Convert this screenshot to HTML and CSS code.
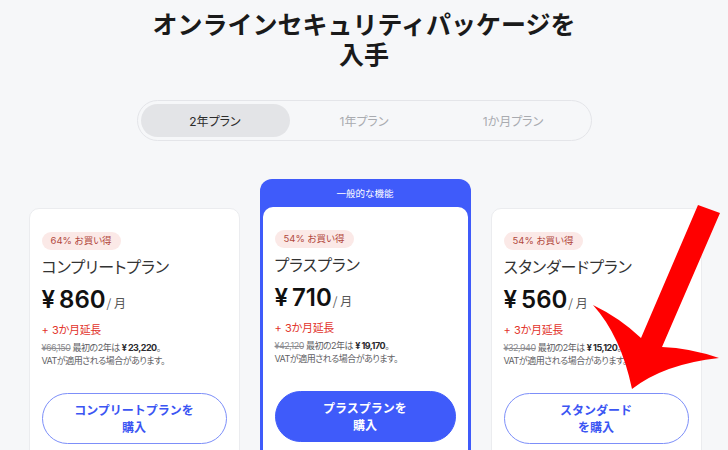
FILE: index.html
```html
<!DOCTYPE html>
<html lang="ja">
<head>
<meta charset="utf-8">
<link rel="stylesheet" href="styles.css">
</head>
<body>
<main class="page">
  <h1 class="title">オンラインセキュリティパッケージを入手</h1>
  <div class="tabs">
    <div class="tab active">2年プラン</div>
    <div class="tab">1年プラン</div>
    <div class="tab">1か月プラン</div>
  </div>
  <div class="cards">
    <section class="card">
      <span class="badge">64% お買い得</span>
      <h2 class="plan">コンプリートプラン</h2>
      <div class="price"><span class="yen">¥</span>860<span class="per">/ 月</span></div>
      <div class="extra">+ 3か月延長</div>
      <div class="detail">
        <div class="line"><s>¥66,150</s> 最初の2年は <b>¥ 23,220</b>。</div>
        <div class="line">VATが適用される場合があります。</div>
      </div>
      <button class="btn"><span class="bl">コンプリートプランを</span><span class="bl">購入</span></button>
    </section>
    <div class="featured">
      <div class="featured-head">一般的な機能</div>
      <section class="card inner">
        <span class="badge">54% お買い得</span>
        <h2 class="plan">プラスプラン</h2>
        <div class="price"><span class="yen">¥</span>710<span class="per">/ 月</span></div>
        <div class="extra">+ 3か月延長</div>
        <div class="detail">
          <div class="line"><s>¥42,120</s> 最初の2年は <b>¥ 19,170</b>。</div>
          <div class="line">VATが適用される場合があります。</div>
        </div>
        <button class="btn solid"><span class="bl">プラスプランを</span><span class="bl">購入</span></button>
      </section>
    </div>
    <section class="card">
      <span class="badge">54% お買い得</span>
      <h2 class="plan">スタンダードプラン</h2>
      <div class="price"><span class="yen">¥</span>560<span class="per">/ 月</span></div>
      <div class="extra">+ 3か月延長</div>
      <div class="detail">
        <div class="line"><s>¥32,940</s> 最初の2年は <b>¥ 15,120</b>。</div>
        <div class="line">VATが適用される場合があります。</div>
      </div>
      <button class="btn"><span class="bl">スタンダード</span><span class="bl">を購入</span></button>
    </section>
  </div>
  <svg class="arrow" width="728" height="450" viewBox="0 0 728 450" aria-hidden="true">
    <path d="M698,205 L720,213 L662,347 Q690,348 719,358 Q664,364 632,389 Q621,336 593,305 Q620,318 641,338 Z" fill="#ff0000"/>
  </svg>
</main>
</body>
</html>
```
FILE: styles.css
```css
html, body {
  margin: 0;
  padding: 0;
  height: 450px;
  overflow: hidden;
}
body {
  background: #f6f7f9;
  font-family: "Inter", "Noto Sans CJK JP", sans-serif;
  color: #1d1d1f;
}
.page {
  position: relative;
  padding-top: 8px;
}
.title {
  margin: 0 auto;
  max-width: 436px;
  font-family: "Noto Sans CJK JP", sans-serif;
  font-size: 25px;
  line-height: 30px;
  font-weight: 700;
  text-align: center;
  color: #1a1a1a;
}
.tabs {
  box-sizing: border-box;
  width: 455px;
  height: 41px;
  margin: 32px auto 0;
  padding: 3px;
  border: 1px solid #e4e5e9;
  border-radius: 21px;
  display: grid;
  grid-template-columns: repeat(3, 1fr);
  font-size: 12px;
  font-feature-settings: "palt";
}
.tab {
  display: flex;
  align-items: center;
  justify-content: center;
  color: #a9abb0;
  border-radius: 17px;
}
.tab.active {
  background: #e3e4e7;
  color: #2b2b2b;
}
.cards {
  display: flex;
  justify-content: center;
  align-items: flex-start;
  gap: 20px;
  margin-top: 38px;
  padding-left: 2px;
}
.card {
  box-sizing: border-box;
  width: 211px;
  height: 260px;
  margin-top: 29px;
  padding: 23px 12px 0;
  background: #fff;
  border: 1px solid #ebecef;
  border-radius: 10px;
  display: flex;
  flex-direction: column;
  align-items: flex-start;
}
.featured {
  box-sizing: border-box;
  width: 211px;
  background: #3f5bfa;
  border-radius: 12px;
  padding: 0 3px 3px;
}
.featured-head {
  height: 28px;
  display: flex;
  align-items: center;
  justify-content: center;
  color: #fff;
  font-size: 9.5px;
  font-family: "Noto Sans CJK JP", sans-serif;
}
.card.inner {
  width: 100%;
  margin-top: 0;
  border: none;
  border-radius: 10px;
}
.badge {
  height: 18px;
  padding: 0 9px;
  border-radius: 9px;
  background: #fbe9e7;
  color: #b2483d;
  font-size: 9.5px;
  line-height: 18px;
  font-feature-settings: "palt";
}
.plan {
  margin: 6px 0 0;
  font-family: "Noto Sans CJK JP", sans-serif;
  font-weight: 400;
  font-size: 16px;
  line-height: 20px;
  color: #333;
  font-feature-settings: "palt";
}
.price {
  margin-top: 10px;
  font-size: 24px;
  line-height: 28px;
  font-weight: 600;
  color: #111;
  display: flex;
  align-items: baseline;
}
.yen {
  margin-right: 4px;
}
.per {
  font-size: 12px;
  font-weight: 400;
  color: #555;
  margin-left: 1px;
  font-family: "Noto Sans CJK JP", sans-serif;
}
.extra {
  margin-top: 5px;
  font-size: 11px;
  line-height: 16px;
  letter-spacing: -0.4px;
  word-spacing: 1px;
  color: #e2332b;
  font-family: "Inter", "Noto Sans CJK JP", sans-serif;
}
.detail {
  margin-top: 3px;
  font-size: 9px;
  color: #5e5e63;
  letter-spacing: -0.5px;
  font-feature-settings: "palt";
}
.line {
  height: 13px;
  line-height: 13px;
  white-space: nowrap;
}
.detail s {
  color: #8c8c90;
}
.detail b {
  color: #2a2a2e;
  font-weight: 700;
}
.btn {
  box-sizing: border-box;
  width: 100%;
  height: 51px;
  margin-top: 26px;
  border-radius: 26px;
  border: 1.5px solid #7d8ff9;
  background: #fff;
  color: #3b55f3;
  font-family: "Noto Sans CJK JP", sans-serif;
  font-size: 12px;
  font-weight: 700;
  text-align: center;
  padding: 0 0 2px;
  display: flex;
  flex-direction: column;
  align-items: center;
  justify-content: center;
}
.bl {
  display: block;
  height: 17px;
  line-height: 17px;
}
.btn.solid {
  background: #3f5bfa;
  border-color: #3f5bfa;
  color: #fff;
}
.arrow {
  position: absolute;
  top: 0;
  left: 0;
  pointer-events: none;
}
```
